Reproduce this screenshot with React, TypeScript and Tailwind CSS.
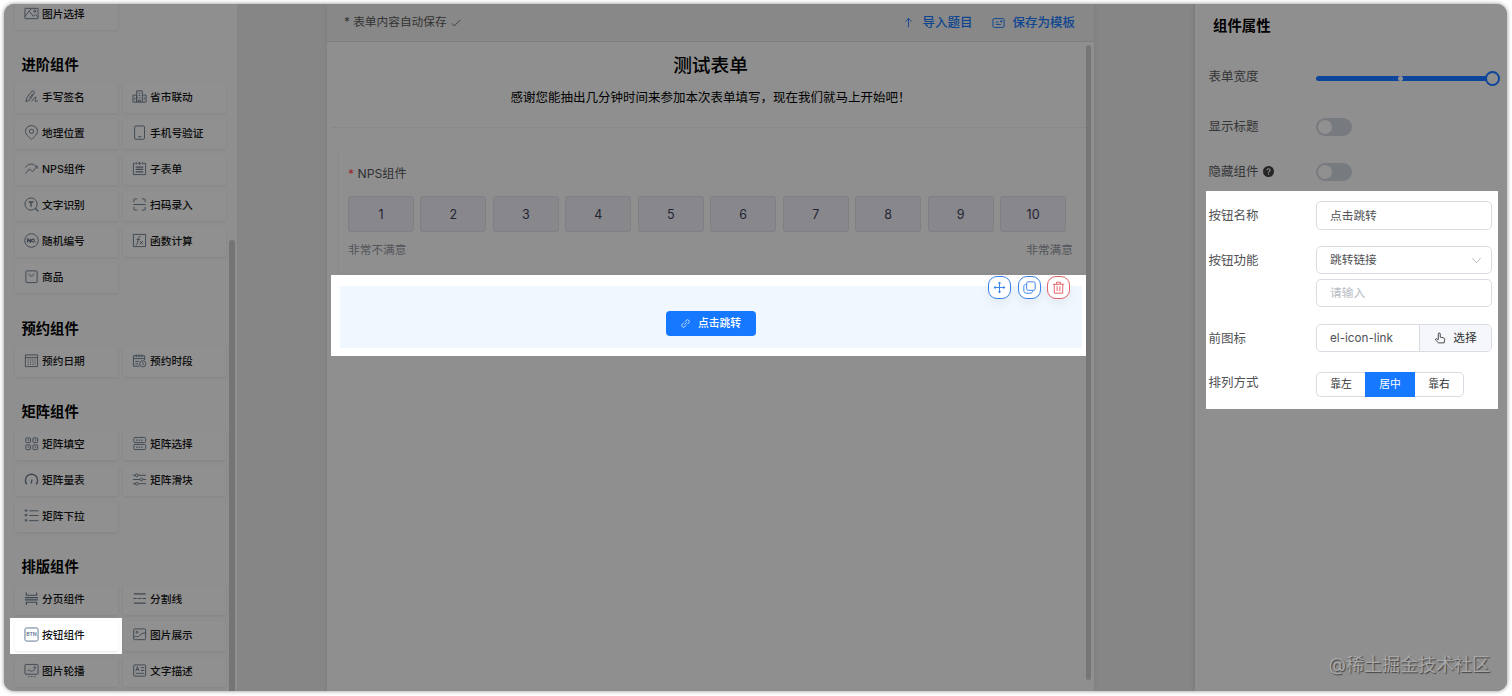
import type { ReactNode } from 'react'
import clsx from 'clsx'

type Item = { name: string; icon: string; active?: boolean }
type Group = { title?: string; items: Item[]; head?: string }

// 16x16 line icons of the component palette
const icons: Record<string, ReactNode> = {
  picture: (
    <>
      <rect x="1" y="2.5" width="14" height="11" rx="0.5" />
      <path d="M1 11l4.500-5.500L10 11l2-2 3 3M5.500 5.500L8 2.800" />
      <circle cx="11.5" cy="5.5" r="1.2" />
    </>
  ),
  sign: <path d="M2 13.500l1.200-4.500 5-6.500c1.500-1.200 3.500.3 2.700 2L6 11.800 2 13.500zM8.300 13c1-2 3-4.500 4.300-4.500 1.500.5-1.800 3.500-.8 4.500.8.500 1.700-.3 3-.5M9.500 5l-4 5" />,
  city: <path d="M1 14V6.500h4V14M5 14V2h6v12M11 6.500h4V14H1M7 4.500h2M7 7h2M7 9.500h2M7 14v-2h2v2M3 9v2.500M13 9v2.500" />,
  pin: (
    <>
      <path d="M8 15.300S1.500 10.300 1.500 6.900a6.500 6.300 0 0 1 13 0C14.500 10.300 8 15.300 8 15.300z" />
      <circle cx="8" cy="6.800" r="2.200" />
    </>
  ),
  phone: (
    <>
      <rect x="2.800" y="1" width="10.500" height="14.200" rx="1.200" />
      <path d="M6.500 12.500h3.500" />
    </>
  ),
  nps: <path d="M1.500 13.500l4.200-5 3.500 2.800 4.600-5.600M11.300 5.300l2.700.2.200 2.700M1.500 7c2-3.600 6.500-4.800 10-2.600" />,
  subform: (
    <>
      <path d="M3.500 2.500H1.500v12h13v-12h-2M6 2.500h4M4.500 1v3M8 1v3M11.500 1v3" />
      <path d="M4 6.500h8M4 9h8M4 11.500h8" strokeWidth="1.300" />
    </>
  ),
  ocr: (
    <>
      <circle cx="7.500" cy="7.500" r="6.500" />
      <path d="M12 12l3.300 3.300M5 5.300h5M7.500 5.300v5" strokeWidth="1.400" />
    </>
  ),
  scan: <path d="M2 5.500V3q0-1 1-1h2.500M10.500 2H13q1 0 1 1v2.500M14 10.500V13q0 1-1 1h-2.500M5.500 14H3q-1 0-1-1v-2.500M1.500 8h13" />,
  no: (
    <>
      <circle cx="8" cy="8" r="7.200" />
      <path d="M3.800 10V6l3 4V6M11.800 10h.6" strokeWidth="1.300" />
      <circle cx="9.500" cy="8" r="1.500" strokeWidth="1.200" />
    </>
  ),
  fx: (
    <>
      <rect x="1.500" y="1.500" width="13" height="13" />
      <path d="M9 3.700c-1.500-.4-1.900.8-2.200 2.300L5.700 11c-.3 1.300-.9 1.700-1.700 1.400M4.800 6.800h3.800M8.500 8.500l3 3.500M11.700 8.500L8.300 12" />
    </>
  ),
  goods: (
    <>
      <rect x="2" y="2" width="12" height="12.500" rx="0.800" />
      <path d="M5.500 5c0 3.400 5 3.400 5 0" />
    </>
  ),
  calendar: (
    <>
      <rect x="1.500" y="2" width="13" height="12.500" />
      <path d="M1.500 5h13" />
      <path d="M4 7.500h8.500M4 9.800h8.500M4 12h8.500" strokeDasharray="1.200 1.200" />
    </>
  ),
  period: (
    <>
      <path d="M8 14H1.500V3h12v4.500M1.500 6h12M4.500 1.500v3M7.500 1.500v3M10.500 1.500v3M3.500 9h4M3.500 11.500h3" />
      <circle cx="11.500" cy="11.500" r="3.300" />
      <path d="M11.500 9.800v1.900l1.200.8" />
    </>
  ),
  grid: (
    <>
      <rect x="2" y="2" width="5" height="5" rx="0.800" />
      <rect x="9.500" y="2" width="5" height="5" rx="0.800" />
      <rect x="2" y="9.500" width="5" height="5" rx="0.800" />
      <rect x="9.500" y="9.500" width="5" height="5" rx="0.800" />
      <path d="M4 4h1v1M11.500 4h1v1M4 11.500h1v1M11.500 11.500h1v1" />
    </>
  ),
  choice: (
    <>
      <rect x="2" y="1.500" width="12.500" height="5.500" rx="1" />
      <rect x="2" y="9" width="12.500" height="5.500" rx="1" />
      <path d="M4.500 4.300h8M4.500 11.800h8" strokeDasharray="1.500 1.200" strokeWidth="1.400" />
    </>
  ),
  gauge: (
    <>
      <path d="M3 13A6.500 6.500 0 1 1 13 13" strokeWidth="1.500" />
      <path d="M7.600 12.500l1-4.500" strokeWidth="1.300" />
    </>
  ),
  sliders: (
    <>
      <path d="M1 3.500h2.500M6.500 3.500H15M1 8h7.500M11.500 8H15M1 12.500h2.500M6.500 12.500H15" />
      <circle cx="5" cy="3.500" r="1.500" />
      <circle cx="10" cy="8" r="1.500" />
      <circle cx="5" cy="12.500" r="1.500" />
    </>
  ),
  dropdown: (
    <>
      <path d="M5.500 3H15.500M5.500 8H15.500M5.500 13.500H15.500" />
      <path d="M.7 2h3L2.200 4zM.7 7h3L2.200 9zM.7 12.500h3l-1.500 2z" fill="currentColor" strokeWidth="0.500" />
    </>
  ),
  pages: <path d="M2.500 1.500V4.500h11V1.500M1 7h14M1 9.500h14M2.500 15v-3h11v3" strokeWidth="1.200" />,
  divider: <path d="M2 3h12.500M2 13h12.500M1.500 8h3.500M6.300 8h3.500M11 8h4" strokeWidth="1.300" />,
  button: <rect x="1" y="1" width="14" height="14" rx="1.800" />,
  image: (
    <>
      <rect x="1.800" y="2" width="12.700" height="11.500" rx="1" />
      <path d="M2 11.500c2-3.500 3.500.2 5.200-1.500 1.900-2 3-3.500 7.300-3.700" />
      <circle cx="5.300" cy="5.500" r="1" />
    </>
  ),
  carousel: (
    <>
      <rect x="1" y="1.500" width="14" height="10.500" rx="1.200" />
      <path d="M4 8.500c2-2.500 3 1.500 5 0s1.500-1 3-1M4.500 14.500h1.500M7.500 14.500h1.500M10.500 14.500h1.500" />
      <circle cx="11.500" cy="4.800" r="1" />
    </>
  ),
  text: (
    <>
      <rect x="1.800" y="2" width="12.700" height="12" rx="1" />
      <path d="M4 8.500l1.800-4.500 1.800 4.500M4.600 7h2.400M9.500 5h3.500M9.500 8h3.500M4 11h9" />
    </>
  ),
}

const groups: Group[] = [
  { items: [{ name: '图片选择', icon: 'picture' }] },
  {
    title: '进阶组件',
    head: 'h-[53px] pt-[23px]',
    items: [
      { name: '手写签名', icon: 'sign' },
      { name: '省市联动', icon: 'city' },
      { name: '地理位置', icon: 'pin' },
      { name: '手机号验证', icon: 'phone' },
      { name: 'NPS组件', icon: 'nps' },
      { name: '子表单', icon: 'subform' },
      { name: '文字识别', icon: 'ocr' },
      { name: '扫码录入', icon: 'scan' },
      { name: '随机编号', icon: 'no' },
      { name: '函数计算', icon: 'fx' },
      { name: '商品', icon: 'goods' },
    ],
  },
  {
    title: '预约组件',
    head: 'h-[54px] pt-6',
    items: [
      { name: '预约日期', icon: 'calendar' },
      { name: '预约时段', icon: 'period' },
    ],
  },
  {
    title: '矩阵组件',
    head: 'h-[53px] pt-[23px]',
    items: [
      { name: '矩阵填空', icon: 'grid' },
      { name: '矩阵选择', icon: 'choice' },
      { name: '矩阵量表', icon: 'gauge' },
      { name: '矩阵滑块', icon: 'sliders' },
      { name: '矩阵下拉', icon: 'dropdown' },
    ],
  },
  {
    title: '排版组件',
    head: 'h-[53px] pt-[23px]',
    items: [
      { name: '分页组件', icon: 'pages' },
      { name: '分割线', icon: 'divider' },
      { name: '按钮组件', icon: 'button', active: true },
      { name: '图片展示', icon: 'image' },
      { name: '图片轮播', icon: 'carousel' },
      { name: '文字描述', icon: 'text' },
    ],
  },
]

function Icon({ name }: { name: string }) {
  return (
    <svg viewBox="0 0 16 16" className="w-[15px] h-[15px] flex-shrink-0" fill="none" stroke="currentColor" strokeWidth="1" strokeLinejoin="round">
      {icons[name]}
      {name === 'button' && (
        <text x="8" y="10" textAnchor="middle" fontSize="5.500" fontWeight="600" fill="currentColor" stroke="none">BTN</text>
      )}
    </svg>
  )
}

function Card({ item }: { item: Item }) {
  return (
    <div className="relative h-[30px]">
      {item.active && <div className="absolute -left-[5px] -right-1 -top-[3px] -bottom-[3px] bg-white" />}
      <div
        className={clsx(
          'relative flex items-center h-full pl-[9px] rounded-[3px] text-[10.7px] font-medium whitespace-nowrap',
          item.active ? 'bg-white text-[#111] shadow-[0_1px_3px_rgba(0,0,0,0.1)]' : 'bg-[#909090] text-[#0d0d0d] shadow-[0_1px_3px_rgba(0,0,0,0.08)]'
        )}
      >
        <span className={clsx('mr-[3px] -mt-[3px]', item.active ? 'text-[#5c7391]' : 'text-[#3e4751]')}>
          <Icon name={item.icon} />
        </span>
        {item.name}
      </div>
    </div>
  )
}

function Sidebar() {
  return (
    <aside className="relative w-[233px] h-full flex-shrink-0 bg-[#8f8f8f] overflow-hidden">
      <div className="-mt-[4px] pl-[11px] pr-[11px]">
        {groups.map((g, i) => (
          <section key={i}>
            {g.title && <h3 className={clsx('pl-[6.5px] text-[14.3px] leading-6 font-bold text-black', g.head)}>{g.title}</h3>}
            <div className="grid grid-cols-[103px_103px] gap-x-[5px] gap-y-[6px]">
              {g.items.map(item => <Card key={item.name} item={item} />)}
            </div>
          </section>
        ))}
      </div>
      <div className="absolute left-[225px] top-[236px] -bottom-2 w-[6px] rounded-full bg-[#757575]" />
    </aside>
  )
}

function RoundButton({ danger, className, children }: { danger?: boolean; className?: string; children: ReactNode }) {
  return (
    <button
      className={clsx(
        'w-[23px] h-[23px] flex items-center justify-center rounded-[9px] border bg-white shadow-[0_5px_10px_rgba(0,0,0,0.06)]',
        danger ? 'border-[#e5626b] text-[#e5626b]' : 'border-[#3a82ea] text-[#3a82ea]',
        className
      )}
    >
      <svg viewBox="0 0 16 16" className="w-[13px] h-[13px]" fill="none" stroke="currentColor" strokeWidth="1.200" strokeLinejoin="round">
        {children}
      </svg>
    </button>
  )
}

function Canvas() {
  return (
    <main className="relative w-[767px] h-full flex-shrink-0 bg-[#8f8f8f] shadow-[0_0_5px_rgba(0,0,0,0.08)]">
      <header className="flex items-center h-[38px] pt-px pl-[18px] pr-[19px] border-b border-[#7d7d7d] bg-[#888888] text-[11.7px] text-[#333]">
        <span className="-ml-px">* 表单内容自动保存</span>
        <svg viewBox="0 0 12 12" className="w-[10px] h-[10px] ml-1 -mt-px" fill="none" stroke="currentColor"><path d="M1 6.500l3 3 7-7" /></svg>
        <div className="ml-auto flex items-center text-[12.5px] font-medium text-[#0d4590]">
          <svg viewBox="0 0 12 12" className="w-[11px] h-[11px] mr-2 -mt-px" fill="none" stroke="currentColor"><path d="M6 11V1.500M2.500 5L6 1.500 9.500 5" /></svg>
          <span>导入题目</span>
          <svg viewBox="0 0 14 12" className="w-[13px] h-3 ml-5 mr-[7px]" fill="none" stroke="currentColor">
            <rect x="1" y="1.200" width="12" height="9.600" rx="1.500" />
            <path d="M4 5h3M4 7.500h5.500M10 3v2.500M8.800 4.200h2.400" />
          </svg>
          <span>保存为模板</span>
        </div>
      </header>

      <div className="ml-1 w-[755px]">
        <div className="h-[86px] border-b border-[#888888] text-center text-black">
          <h1 className="pt-[10px] pl-1 text-[18.7px] leading-7 font-medium">测试表单</h1>
          <p className="pt-2 pl-1 text-[12.5px] leading-5">感谢您能抽出几分钟时间来参加本次表单填写，现在我们就马上开始吧！</p>
        </div>

        <div className="mt-[21px] ml-[7px] mr-[3px] h-[125px] pt-[15px] pl-[9px] pr-[10px] border-l border-b border-[#8b8b8b]">
          <p className="text-[12.2px] leading-5 text-[#303133]"><span className="text-[#9c1f30]">*</span> NPS组件</p>
          <div className="mt-[12px] flex gap-[6.5px] pr-[7px]">
            {Array.from({ length: 10 }, (_, i) => (
              <div key={i} className="flex-1 h-9 flex items-center justify-center rounded-[3px] border border-[#808084] bg-[#88888c] pt-[2px] text-[12.5px] text-[#222433]">
                {i + 1}
              </div>
            ))}
          </div>
          <div className="mt-[9px] flex justify-between text-[11.700px] leading-[18px] text-[#52555a]">
            <span>非常不满意</span>
            <span>非常满意</span>
          </div>
        </div>

        <div className="relative mt-px h-[81px] bg-white pt-[11px] pl-[9px] pr-1">
          <div className="h-[62px] flex justify-center items-center pt-[13px] bg-[#f0f7ff]">
            <button className="w-[90px] h-[25px] flex items-center justify-center rounded-[4px] bg-[#1677ff] pt-px text-white text-[10.8px] font-medium">
              <svg viewBox="0 0 12 12" className="w-[9px] h-[9px] mr-2 -mt-px" fill="none" stroke="currentColor" strokeWidth="1">
                <path d="M4.700 7.300l2.700-2.700M5 3.800l2-2a2.300 2.300 0 0 1 3.300 3.300l-2 2M7 8.200l-2 2a2.300 2.300 0 0 1-3.300-3.300l2-2" />
              </svg>
              点击跳转
            </button>
          </div>
          <div className="absolute right-4 top-[1px] flex">
            <RoundButton className="mr-[7px]">
              <path d="M8 2v12M2 8h12" />
              <path d="M6.500 3L8 1l1.500 2zM6.500 13L8 15l1.500-2zM3 6.500L1 8l2 1.500zM13 6.500l2 1.500-2 1.500z" fill="currentColor" strokeWidth="0.500" />
            </RoundButton>
            <RoundButton className="mr-[6px]">
              <rect x="4.500" y="1" width="10.500" height="10.500" rx="2" />
              <path d="M4.500 4C2.300 4 1 5 1 6.800V12c0 1.800 1.200 3 3 3h5.200c1.800 0 2.800-1.200 2.800-3.500" />
            </RoundButton>
            <RoundButton danger>
              <path d="M1 4h14M2.800 4v11h10.400V4M5.500 4V1.500h5V4M6.300 6.500v6M9.700 6.500v6" />
            </RoundButton>
          </div>
        </div>
      </div>
      <div className="absolute left-[759px] top-[41px] w-[5px] h-[635px] rounded-full bg-[#767676]" />
    </main>
  )
}

function Row({ label, className, children }: { label: ReactNode; className?: string; children: ReactNode }) {
  return (
    <div className={clsx('flex items-center', className)}>
      <div className="w-[107px] flex-shrink-0 flex items-center pt-[2px] -ml-[0.500px] mr-[0.500px] text-[12.5px]">{label}</div>
      {children}
    </div>
  )
}

function Toggle() {
  return (
    <div className="relative top-px w-9 h-[18px] p-[2px] rounded-full bg-[#777a7e]">
      <div className="w-[14px] h-[14px] rounded-full bg-[#909090]" />
    </div>
  )
}

const fieldClass = 'w-[176px] h-7 flex items-center rounded-[5px] border border-[#d9dce2] bg-white text-[11.7px]'

function Properties() {
  return (
    <aside className="w-[312px] h-full flex-shrink-0 bg-[#8f8f8f] shadow-[0_0_5px_rgba(0,0,0,0.15)] text-[#303133]">
      <h2 className="pl-[18px] pt-[10px] text-[14.4px] leading-6 font-bold text-black">组件属性</h2>

      <div className="pl-[14px] text-[#343537]">
        <Row label="表单宽度" className="mt-[28px] h-5">
          <div className="relative top-[2px] w-[176px] h-[5px] rounded-full bg-[#0d459a]">
            <div className="absolute left-[82px] top-0 w-[5px] h-[5px] rounded-full bg-[#909090]" />
            <div className="absolute -right-[8px] -top-[5px] w-[15px] h-[15px] rounded-full border-2 border-[#0d459a] bg-[#8f8f8f]" />
          </div>
        </Row>
        <Row label="显示标题" className="mt-[30px] h-5"><Toggle /></Row>
        <Row
          className="mt-[25px] h-5"
          label={
            <>
              隐藏组件
              <svg viewBox="0 0 12 12" className="w-[11px] h-[11px] ml-[4px] -mt-[2px]">
                <circle cx="6" cy="6" r="6" fill="#252525" />
                <path d="M4.300 4.700c.1-2.300 3.600-2.200 3.500-.1C7.800 5.800 6 5.900 6 7.300M6 8.300v1.300" fill="none" stroke="#909090" strokeWidth="1.200" />
              </svg>
            </>
          }
        >
          <Toggle />
        </Row>
      </div>

      <div className="mt-[10px] ml-[11px] w-[292px] h-[218px] pt-[10px] pl-[3px] bg-white text-[#505255]">
        <Row label="按钮名称"><div className={clsx(fieldClass, 'h-[29px] pt-[2px] pl-[13px]')}>点击跳转</div></Row>
        <Row label="按钮功能" className="mt-[16px]">
          <div className={clsx(fieldClass, 'pt-[2px] pl-[13px] pr-[9px] justify-between')}>
            跳转链接
            <svg viewBox="0 0 12 12" className="w-[11px] h-[11px] -mt-[2px]" fill="none" stroke="#b4b8bf"><path d="M1.500 3.500L6 8.500l4.500-5" /></svg>
          </div>
        </Row>
        <Row label="" className="mt-[5px]"><div className={clsx(fieldClass, 'pt-[2px] pl-[13px] text-[#b9bcc3]')}>请输入</div></Row>
        <Row label="前图标" className="mt-[17px]">
          <div className={clsx(fieldClass, 'overflow-hidden')}>
            <span className="flex-1 pl-[13px] pt-[2px]">el-icon-link</span>
            <span className="w-[72px] h-full flex items-center justify-center pt-[2px] border-l border-[#d9dce2] bg-[#f5f7fa] text-[#303133]">
              <svg viewBox="0 0 14 14" className="w-3 h-3 mr-[7px] -mt-[2px]" fill="none" stroke="currentColor" strokeLinejoin="round">
                <path d="M5 9V2.300c0-1.700 2.300-1.700 2.300 0V6l4 .9c1 .3 1.400 1 1.200 2l-.7 3.800H5.200L2 9.500c-.8-1 .4-2.200 1.400-1.400L5 9.300" />
              </svg>
              选择
            </span>
          </div>
        </Row>
        <Row label="排列方式" className="mt-[18px]">
          <div className="relative top-[2px] flex w-[148px] h-[25px] text-[10.800px] text-[#303133]">
            <span className="flex-1 flex items-center justify-center pt-[2px] rounded-l-[5px] border border-r-0 border-[#d9dce2]">靠左</span>
            <span className="w-[50px] flex items-center justify-center pt-[2px] bg-[#1677ff] text-white">居中</span>
            <span className="flex-1 flex items-center justify-center pt-[2px] rounded-r-[5px] border border-l-0 border-[#d9dce2]">靠右</span>
          </div>
        </Row>
      </div>
    </aside>
  )
}

export default function App() {
  return (
    <div className="h-[696px] w-[1512px] bg-white pt-1 pl-1 overflow-hidden font-['Inter','Noto_Sans_CJK_SC',sans-serif]">
      <div className="relative w-[1503px] h-[687px] flex rounded-[10px] shadow-[0_0_4px_rgba(0,0,0,0.45)]">
        <div className="w-full h-full flex rounded-[10px] overflow-hidden bg-[#868686]">
          <Sidebar />
          <div className="w-[90px] flex-shrink-0" />
          <Canvas />
          <div className="w-[101px] flex-shrink-0" />
          <Properties />
        </div>
        <div className="absolute right-[17px] bottom-[12px] text-[18px] leading-7 text-[#a8a8a8] [text-shadow:1px_1px_1px_#444]">@稀土掘金技术社区</div>
      </div>
    </div>
  )
}
